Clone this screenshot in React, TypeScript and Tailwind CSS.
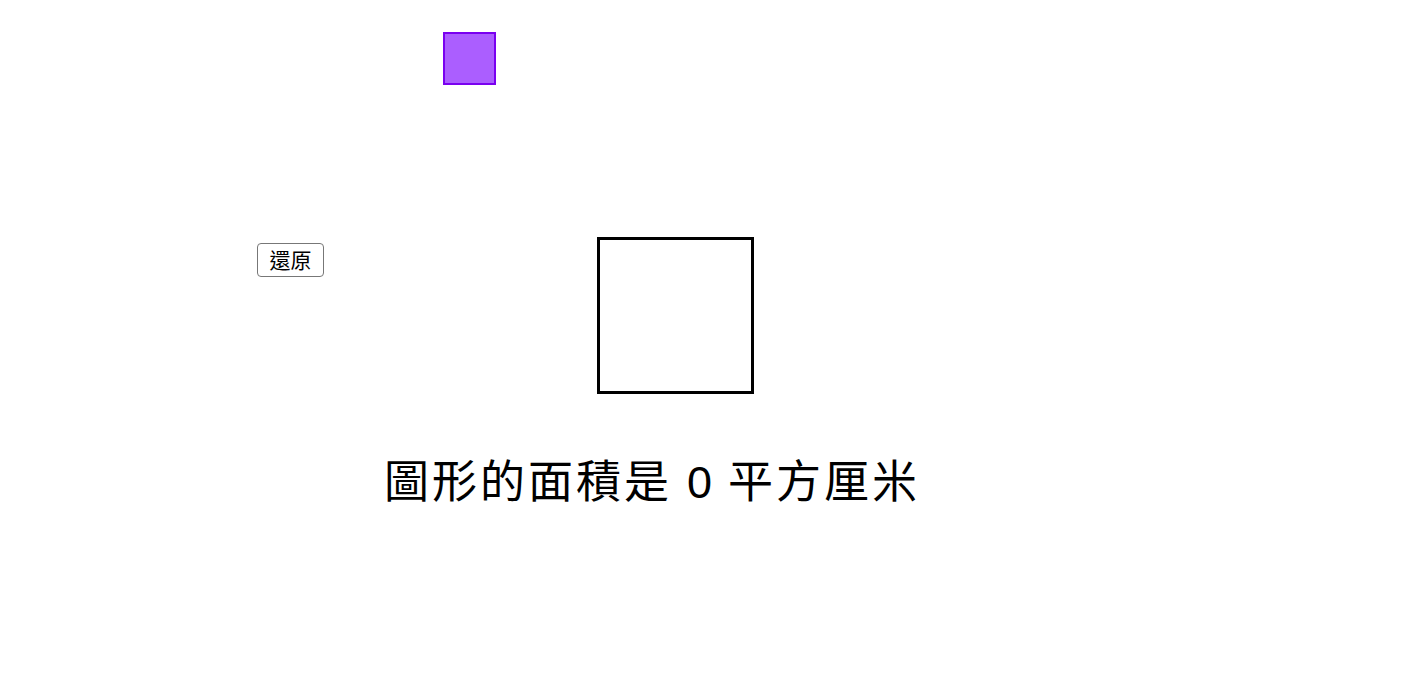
import { useState } from "react";

export default function App() {
  const [area, setArea] = useState(0);

  return (
    <div className="relative w-[1415px] h-[691px] bg-white overflow-hidden">
      {/* draggable tile */}
      <div
        className="absolute left-[443px] top-[32px] w-[53px] h-[53px] bg-[#ab5eff] border-2 border-[#7a00f0]"
        onClick={() => setArea(area)}
      />

      {/* reset button */}
      <button
        onClick={() => setArea(0)}
        className="absolute left-[257px] top-[243px] w-[67px] h-[34px] rounded-[4px] border border-[#777] bg-white text-[21px] leading-none text-black flex items-center justify-center pb-[2px]"
        style={{ fontFamily: '"Noto Sans CJK TC", serif' }}
      >
        還原
      </button>

      {/* target square */}
      <div className="absolute left-[597px] top-[237px] w-[157px] h-[157px] border-[3px] border-black" />

      {/* area label */}
      <div
        className="absolute left-[384px] top-[452px] flex items-center text-[45px] leading-none text-black"
        style={{ fontFamily: '"Noto Sans CJK TC", sans-serif' }}
      >
        <span className="tracking-[3px]">圖形的面積是</span>
        <span className="ml-[15px] mr-[16px] mt-[8px]" style={{ fontFamily: '"Liberation Sans", sans-serif' }}>
          {area}
        </span>
        <span className="tracking-[3px]">平方厘米</span>
      </div>
    </div>
  );
}
